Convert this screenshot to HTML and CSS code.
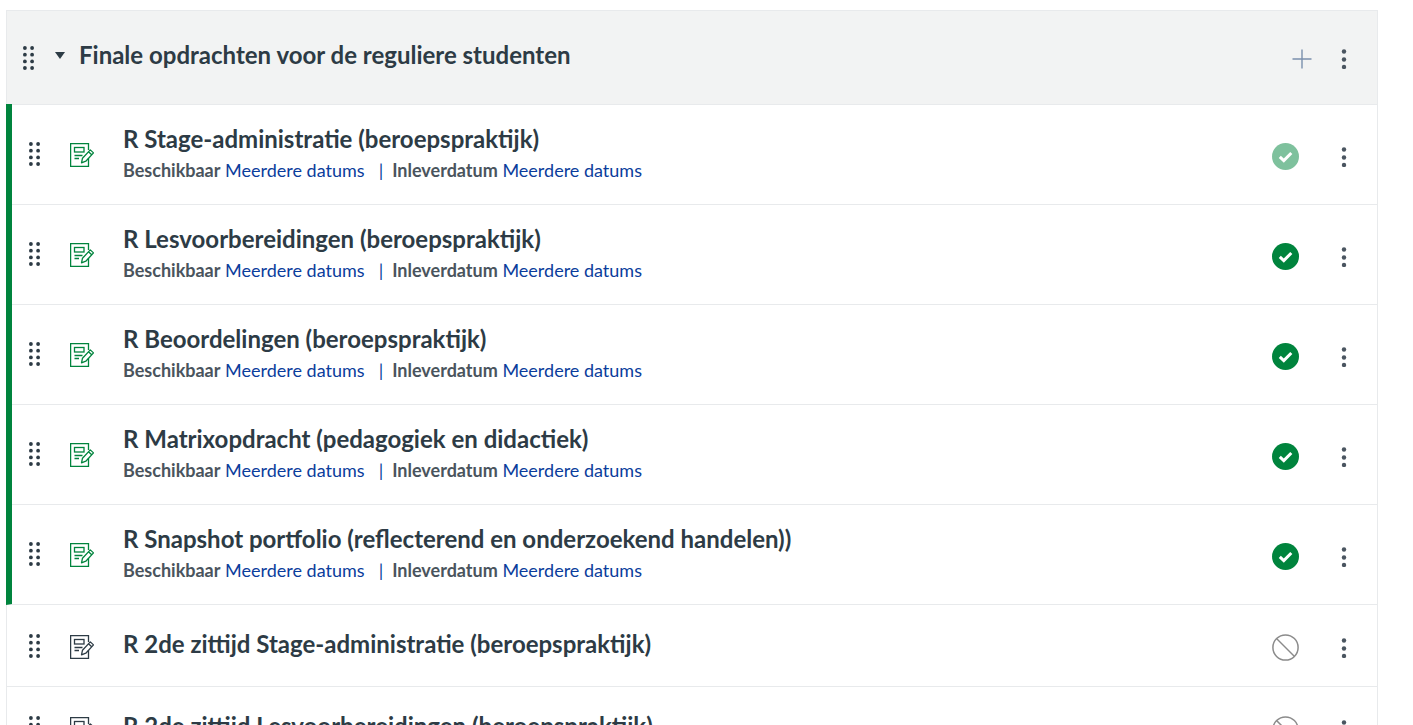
FILE: index.html
```html
<!DOCTYPE html>
<html lang="nl">
<head>
<meta charset="utf-8">
<title>Opdrachten</title>
<link rel="stylesheet" href="styles.css">
</head>
<body>
<svg class="defs" width="0" height="0" aria-hidden="true">
  <defs>
    <symbol id="grip" viewBox="0 0 11 24">
      <circle cx="1.900" cy="2" r="1.900"/><circle cx="9.100" cy="2" r="1.900"/>
      <circle cx="1.900" cy="8.700" r="1.900"/><circle cx="9.100" cy="8.700" r="1.900"/>
      <circle cx="1.900" cy="15.400" r="1.900"/><circle cx="9.100" cy="15.400" r="1.900"/>
      <circle cx="1.900" cy="22" r="1.900"/><circle cx="9.100" cy="22" r="1.900"/>
    </symbol>
    <symbol id="kebab" viewBox="0 0 6 20">
      <circle cx="3" cy="2.5" r="2.2"/><circle cx="3" cy="10.5" r="2.2"/><circle cx="3" cy="18" r="2.2"/>
    </symbol>
    <symbol id="assign" viewBox="0 0 24 24">
      <path fill="none" stroke="currentColor" stroke-width="1.300" d="M18.5 7V.6H.6v22.8h17.9V15"/>
      <rect x="4.5" y="4.5" width="9.5" height="4.5" fill="none" stroke="currentColor" stroke-width="1.300"/>
      <path fill="none" stroke="currentColor" stroke-width="1.300" d="M4.5 12.5h8M4.5 15.5h4.500"/>
      <path fill="none" stroke="currentColor" stroke-width="1.300" stroke-linejoin="round" d="M11.500 19.800l1-4.600 7.800-8.300 3.200 3-7.700 8.300zM18.500 8.800l3.200 3"/>
    </symbol>
    <symbol id="check" viewBox="0 0 27 27">
      <circle cx="13.500" cy="13.500" r="13.500" fill="currentColor"/>
      <path fill="none" stroke="#fff" stroke-width="3" d="M7.800 13.800l4 3.800 7.500-7.600"/>
    </symbol>
    <symbol id="ban" viewBox="0 0 27 27">
      <circle cx="13.500" cy="13.500" r="12.600" fill="none" stroke="currentColor" stroke-width="1.500"/>
      <path fill="none" stroke="currentColor" stroke-width="1.500" d="M4.500 4.500l18 18"/>
    </symbol>
  </defs>
</svg>
<main class="group">
  <header class="group-head">
    <svg class="grip grip-head"><use href="#grip"/></svg>
    <span class="caret"></span>
    <h2 class="group-title">Finale opdrachten voor de reguliere studenten</h2>
    <svg class="plus" viewBox="0 0 20 20"><path d="M10 .5v19M.5 10h19"/></svg>
    <svg class="kebab kebab-head"><use href="#kebab"/></svg>
  </header>
  <ul class="rows">
    <li class="row published">
      <svg class="grip"><use href="#grip"/></svg>
      <svg class="assign"><use href="#assign"/></svg>
      <div class="info">
        <h3 class="title">R Stage-administratie (beroepspraktijk)</h3>
        <p class="meta"><b>Beschikbaar</b> <a>Meerdere datums</a><span class="sep">|</span><b>Inleverdatum</b> <a>Meerdere datums</a></p>
      </div>
      <svg class="status faded"><use href="#check"/></svg>
      <svg class="kebab"><use href="#kebab"/></svg>
    </li>
    <li class="row published">
      <svg class="grip"><use href="#grip"/></svg>
      <svg class="assign"><use href="#assign"/></svg>
      <div class="info">
        <h3 class="title">R Lesvoorbereidingen (beroepspraktijk)</h3>
        <p class="meta"><b>Beschikbaar</b> <a>Meerdere datums</a><span class="sep">|</span><b>Inleverdatum</b> <a>Meerdere datums</a></p>
      </div>
      <svg class="status"><use href="#check"/></svg>
      <svg class="kebab"><use href="#kebab"/></svg>
    </li>
    <li class="row published">
      <svg class="grip"><use href="#grip"/></svg>
      <svg class="assign"><use href="#assign"/></svg>
      <div class="info">
        <h3 class="title">R Beoordelingen (beroepspraktijk)</h3>
        <p class="meta"><b>Beschikbaar</b> <a>Meerdere datums</a><span class="sep">|</span><b>Inleverdatum</b> <a>Meerdere datums</a></p>
      </div>
      <svg class="status"><use href="#check"/></svg>
      <svg class="kebab"><use href="#kebab"/></svg>
    </li>
    <li class="row published">
      <svg class="grip"><use href="#grip"/></svg>
      <svg class="assign"><use href="#assign"/></svg>
      <div class="info">
        <h3 class="title">R Matrixopdracht (pedagogiek en didactiek)</h3>
        <p class="meta"><b>Beschikbaar</b> <a>Meerdere datums</a><span class="sep">|</span><b>Inleverdatum</b> <a>Meerdere datums</a></p>
      </div>
      <svg class="status"><use href="#check"/></svg>
      <svg class="kebab"><use href="#kebab"/></svg>
    </li>
    <li class="row published">
      <svg class="grip"><use href="#grip"/></svg>
      <svg class="assign"><use href="#assign"/></svg>
      <div class="info">
        <h3 class="title">R Snapshot portfolio (reflecterend en onderzoekend handelen))</h3>
        <p class="meta"><b>Beschikbaar</b> <a>Meerdere datums</a><span class="sep">|</span><b>Inleverdatum</b> <a>Meerdere datums</a></p>
      </div>
      <svg class="status"><use href="#check"/></svg>
      <svg class="kebab"><use href="#kebab"/></svg>
    </li>
    <li class="row compact">
      <svg class="grip"><use href="#grip"/></svg>
      <svg class="assign"><use href="#assign"/></svg>
      <div class="info">
        <h3 class="title">R 2de zittijd Stage-administratie (beroepspraktijk)</h3>
      </div>
      <svg class="status ban"><use href="#ban"/></svg>
      <svg class="kebab"><use href="#kebab"/></svg>
    </li>
    <li class="row compact">
      <svg class="grip"><use href="#grip"/></svg>
      <svg class="assign"><use href="#assign"/></svg>
      <div class="info">
        <h3 class="title">R 2de zittijd Lesvoorbereidingen (beroepspraktijk)</h3>
      </div>
      <svg class="status ban"><use href="#ban"/></svg>
      <svg class="kebab"><use href="#kebab"/></svg>
    </li>
  </ul>
</main>
</body>
</html>
```

FILE: styles.css
```css
html, body {
  margin: 0;
  height: 725px;
  overflow: hidden;
  background: #fff;
}

body {
  padding: 10px 35px 0 6px;
  box-sizing: border-box;
  font-family: Lato, "Liberation Sans", sans-serif;
  color: #2d3b45;
}

.defs {
  display: block;
  height: 0;
}

.group {
  border: 1px solid #e8eaec;
  border-bottom: 0;
}

.group-head {
  display: flex;
  align-items: center;
  height: 93px;
  padding: 0 30px 0 16px;
  background: #f2f3f3;
  border-bottom: 1px solid #e8eaec;
}

.group-title {
  flex: 1;
  margin: 0 0 6px 14px;
  font-size: 24px;
  font-weight: 700;
  line-height: 30px;
}

.grip {
  width: 11px;
  height: 24px;
  flex: none;
  fill: #2d3b45;
}

.grip-head {
  margin-top: 1px;
}

.caret {
  width: 0;
  height: 0;
  margin: 0 0 5px 21px;
  border-left: 5.500px solid transparent;
  border-right: 5.500px solid transparent;
  border-top: 7px solid #2d3b45;
}

.plus {
  width: 20px;
  height: 20px;
  margin: 2px 29px 0 0;
  fill: none;
  stroke: #7b90ad;
  stroke-width: 1.400;
}

.kebab {
  width: 6px;
  height: 20px;
  flex: none;
  margin-top: 5px;
  fill: #4a5560;
}

.kebab-head {
  margin-top: 2px;
}

.rows {
  margin: 0;
  padding: 0;
  list-style: none;
}

.row {
  display: flex;
  align-items: center;
  height: 99px;
  padding: 0 30px 0 22px;
  border-bottom: 1px solid #e8eaec;
}

.row.published {
  margin-left: -1px;
  margin-top: -1px;
  height: 100px;
  padding-left: 17px;
  border-left: 6px solid #00843d;
}

.row.compact {
  height: 81px;
}

.assign {
  width: 24px;
  height: 24px;
  flex: none;
  margin-left: 30px;
  margin-top: 2px;
  color: #2d3b45;
}

.published .assign {
  color: #00843d;
}

.info {
  flex: 1;
  margin-left: 29px;
  min-width: 0;
}

.title {
  margin: -3px 0 0;
  font-size: 24px;
  font-weight: 700;
  line-height: 30px;
}

.compact .title {
  margin-top: -4px;
}

.meta {
  margin: 4px 0 0;
  font-size: 18px;
  line-height: 24px;
}

.meta b {
  font-weight: 700;
  color: #4a545d;
}

.meta a {
  color: #0b3d9c;
}

.sep {
  margin: 0 9px 0 14px;
  color: #0b3d9c;
}

.status {
  width: 27px;
  height: 27px;
  flex: none;
  margin-top: 4px;
  margin-right: 42px;
  color: #00843d;
}

.status.faded {
  opacity: 0.5;
}

.status.ban {
  color: #8b8b8b;
}
```
